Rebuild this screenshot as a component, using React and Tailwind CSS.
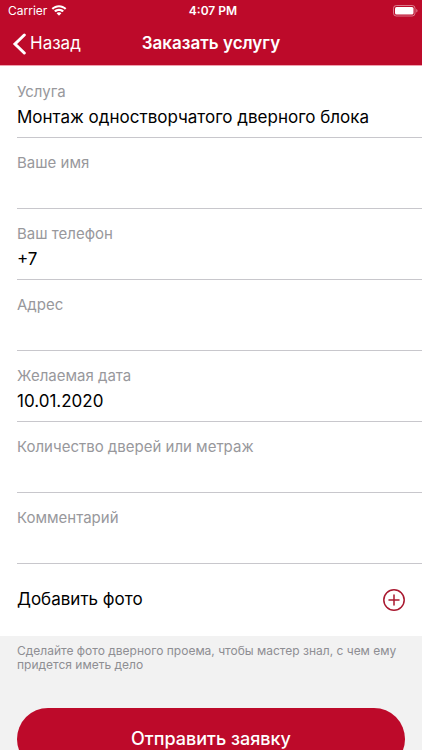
import React from 'react'

const fields = [
  { id: 'service', label: 'Услуга', value: 'Монтаж одностворчатого дверного блока' },
  { id: 'name', label: 'Ваше имя', value: '' },
  { id: 'phone', label: 'Ваш телефон', value: '+7', type: 'tel' },
  { id: 'address', label: 'Адрес', value: '' },
  { id: 'date', label: 'Желаемая дата', value: '10.01.2020' },
  { id: 'amount', label: 'Количество дверей или метраж', value: '' },
  { id: 'comment', label: 'Комментарий', value: '' },
]

const WifiIcon = () => (
  <svg className="w-4 h-3" viewBox="0 0 16 12" fill="currentColor" aria-hidden="true">
    <path d="M8 2.3c2.2 0 4.2.9 5.7 2.3.1.1.3.1.4 0l1.1-1.1c.1-.1.1-.3 0-.4C13.3 1.3 10.8.2 8 .2S2.7 1.3.8 3.1c-.1.1-.1.3 0 .4l1.1 1.1c.1.1.3.1.4 0C3.8 3.2 5.8 2.3 8 2.3z" />
    <path d="M8 5.9c1.2 0 2.3.5 3.1 1.2.1.1.3.1.4 0l1.2-1.2c.1-.1.1-.3 0-.4C11.5 4.4 9.8 3.7 8 3.7s-3.5.7-4.7 1.8c-.1.1-.1.3 0 .4l1.2 1.2c.1.1.3.1.4 0C5.7 6.4 6.8 5.9 8 5.9z" />
    <path d="M10.2 8.4c.1-.1.1-.3 0-.4C9.6 7.5 8.8 7.2 8 7.2s-1.6.3-2.2.8c-.1.1-.1.3 0 .4l2 2c.1.1.3.1.4 0z" />
  </svg>
)

const BatteryIcon = () => (
  <svg className="w-[25px] h-3" viewBox="0 0 25 12" aria-hidden="true">
    <rect x="0.5" y="0.5" width="21.5" height="10.5" rx="2.8" fill="none" stroke="white" strokeOpacity="0.45" />
    <rect x="2" y="2" width="18.5" height="7.5" rx="1.5" fill="white" />
    <path d="M23.3 4v3.600c.7-.3 1.200-1 1.200-1.800s-.5-1.500-1.200-1.800z" fill="white" fillOpacity="0.5" />
  </svg>
)

const Header = () => (
  <header className="shrink-0 bg-[#bd0a2a] text-white border-b border-[#f0a0ae]">
    {/* Status bar */}
    <div className="grid grid-cols-3 items-center h-[22px] pl-2 pr-1 text-xs">
      <div className="flex items-center gap-1">
        <span>Carrier</span>
        <WifiIcon />
      </div>
      <span className="text-center font-semibold">4:07 PM</span>
      <div className="flex justify-end">
        <BatteryIcon />
      </div>
    </div>

    {/* Navigation */}
    <div className="grid grid-cols-[1fr_auto_1fr] items-center h-[43px] px-3">
      <button type="button" className="flex items-center gap-1 text-[17px] justify-self-start">
        <svg className="w-[14px] h-[22px]" viewBox="0 0 14 22" fill="none" stroke="currentColor" strokeWidth="3" strokeLinecap="round" aria-hidden="true">
          <path d="M12.300 2 3 11l9.300 9" />
        </svg>
        Назад
      </button>
      <h1 className="text-[17px] font-semibold">Заказать услугу</h1>
    </div>
  </header>
)

const Field = ({ id, label, value, type = 'text' }) => (
  <div className="flex flex-col h-[71px] ml-[17px] pt-3.5 border-b border-[#c8c7cc]">
    <label htmlFor={id} className="text-[15px] leading-[22px] text-[#98989c]">{label}</label>
    <input
      id={id}
      type={type}
      defaultValue={value}
      className="w-full h-7 text-[17px] text-black outline-none"
    />
  </div>
)

const App = () => {
  return (
    <div className="flex flex-col h-screen bg-[#f2f2f2] font-['Inter','Liberation_Sans',sans-serif]">
      <Header />

      <main className="flex-1 overflow-y-auto [scrollbar-width:none]">
        <form>
          <div className="bg-white pt-px">
            {fields.map((field) => (
              <Field key={field.id} {...field} />
            ))}

            <button type="button" className="flex items-center justify-between w-full h-[72px] px-[17px] text-[17px] text-black">
              Добавить фото
              <svg className="w-[22px] h-[22px]" viewBox="0 0 22 22" fill="none" stroke="#a9182f" strokeWidth="1.5" strokeLinecap="round" aria-hidden="true">
                <circle cx="11" cy="11" r="10.2" />
                <path d="M11 6v10M6 11h10" />
              </svg>
            </button>
          </div>

          <p className="px-[17px] pt-2 text-xs leading-[14px] text-[#8e8e93]">
            Сделайте фото дверного проема, чтобы мастер знал, с чем ему придется иметь дело
          </p>

          <div className="px-[17px] pt-9 pb-4">
            <button type="submit" className="w-full h-[62px] rounded-full bg-[#bd0a2a] text-lg font-medium text-white">
              Отправить заявку
            </button>
          </div>
        </form>
      </main>
    </div>
  )
}

export default App
